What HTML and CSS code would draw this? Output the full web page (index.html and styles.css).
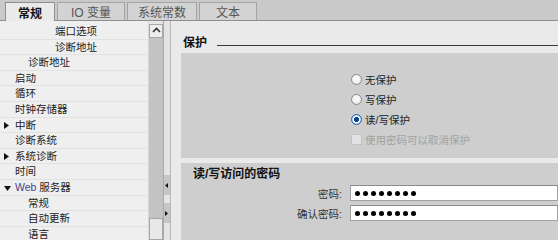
FILE: index.html
```html
<!DOCTYPE html>
<html lang="zh">
  <head>
    <meta charset="UTF-8" />
    <title>属性 - 保护</title>
    <link rel="stylesheet" href="styles.css">
  </head>
  <body>
    <div id="window">
      <div class="tabs">
        <div class="tab tab-general active">常规</div>
        <div class="tab tab-io">IO 变量</div>
        <div class="tab tab-const">系统常数</div>
        <div class="tab tab-text">文本</div>
      </div>

      <div class="main">
        <div class="tree">
          <div class="row lv2">端口选项</div>
          <div class="row lv2">诊断地址</div>
          <div class="row lv1">诊断地址</div>
          <div class="row lv0">启动</div>
          <div class="row lv0">循环</div>
          <div class="row lv0">时钟存储器</div>
          <div class="row lv0"><span class="twisty"><svg width="5" height="7" viewBox="0 0 5 7"><path d="M0 0 L5 3.5 L0 7 Z" fill="#111"/></svg></span>中断</div>
          <div class="row lv0">诊断系统</div>
          <div class="row lv0"><span class="twisty"><svg width="5" height="7" viewBox="0 0 5 7"><path d="M0 0 L5 3.5 L0 7 Z" fill="#111"/></svg></span>系统诊断</div>
          <div class="row lv0">时间</div>
          <div class="row lv0"><span class="twisty"><svg width="7" height="5" viewBox="0 0 7 5"><path d="M0 0 L7 0 L3.5 5 Z" fill="#111"/></svg></span><span class="web">Web</span>&nbsp;服务器</div>
          <div class="row lv1">常规</div>
          <div class="row lv1">自动更新</div>
          <div class="row lv1">语言</div>
        </div>

        <div class="vscroll">
          <div class="sb-up">
            <svg width="13" height="11" viewBox="0 0 13 11"><path d="M3 7 L6.5 3.5 L10 7" fill="none" stroke="#333" stroke-width="1.6"/></svg>
          </div>
          <div class="sb-track"></div>
          <div class="sb-thumb"></div>
        </div>

        <div class="splitter">
          <div class="grip">
            <svg width="4" height="5" viewBox="0 0 4 5"><path d="M3 0 L0 2.5 L3 5 Z" fill="#111"/></svg>
          </div>
          <div class="grip">
            <svg width="4" height="5" viewBox="0 0 4 5"><path d="M0 0 L3 2.5 L0 5 Z" fill="#111"/></svg>
          </div>
        </div>

        <div class="content">
          <div class="section-title">保护</div>

          <div class="panel panel-protect">
            <div class="option">
              <span class="radio"></span>
              <span>无保护</span>
            </div>
            <div class="option">
              <span class="radio"></span>
              <span>写保护</span>
            </div>
            <div class="option">
              <span class="radio checked"></span>
              <span>读/写保护</span>
            </div>
            <div class="option disabled">
              <span class="checkbox"></span>
              <span>使用密码可以取消保护</span>
            </div>
          </div>

          <div class="panel panel-password">
            <div class="panel-title">读/写访问的密码</div>
            <div class="field">
              <label>密码:</label>
              <div class="pwd">
                <span></span><span></span><span></span><span></span>
                <span></span><span></span><span></span><span></span>
              </div>
            </div>
            <div class="field">
              <label>确认密码:</label>
              <div class="pwd">
                <span></span><span></span><span></span><span></span>
                <span></span><span></span><span></span><span></span>
              </div>
            </div>
          </div>
        </div>
      </div>
    </div>
  </body>
</html>
```

FILE: styles.css
```css
body {
  margin: 0;
  padding: 0;
  font-family: "Liberation Sans", "Noto Sans CJK SC", sans-serif;
  font-size: 10.5px;
  color: #222;
  background-color: #eaeaea;
}

#window {
  width: 558px;
  height: 240px;
  overflow: hidden;
  display: flex;
  flex-direction: column;
}

/* tab strip */
.tabs {
  height: 21px;
  box-sizing: border-box;
  display: flex;
  align-items: flex-end;
  gap: 2px;
  padding-left: 5px;
  background-color: #c9c9c9;
  border-bottom: 1px solid #8f8f8f;
}

.tab {
  height: 18px;
  box-sizing: border-box;
  display: flex;
  align-items: center;
  justify-content: center;
  font-size: 12px;
  color: #555;
  background-color: #d3d3d3;
  border: 1px solid #a4a4a4;
  border-bottom: none;
}

.tab.active {
  height: 19px;
  margin-bottom: -1px;
  font-weight: bold;
  color: #111;
  background-color: #eaeaea;
  border-color: #8f8f8f;
}

.tab-general { width: 50px; }
.tab-io { width: 68px; }
.tab-const { width: 70px; }
.tab-text { width: 58px; }

.main {
  flex: 1;
  display: flex;
  min-height: 0;
}

/* navigation tree */
.tree {
  width: 148px;
  padding-top: 3px;
  background-color: #efefef;
  overflow: hidden;
}

.row {
  height: 15.6px;
  box-sizing: border-box;
  line-height: 15px;
  border-bottom: 1px solid #e2e2e2;
  white-space: nowrap;
}

.lv0 { padding-left: 15px; }
.lv1 { padding-left: 28px; }
.lv2 { padding-left: 55px; }

.twisty {
  display: inline-block;
  width: 11px;
  margin-left: -11px;
}

.twisty svg {
  vertical-align: 0;
}

.web {
  color: #4a3f86;
}

/* scrollbar */
.vscroll {
  width: 15px;
  box-sizing: border-box;
  padding-top: 3px;
  display: flex;
  flex-direction: column;
  background-color: #e6e6e6;
  border-left: 1px solid #d8d8d8;
}

.sb-up {
  height: 14px;
  box-sizing: border-box;
  border: 1px solid #a8a8a8;
  background-color: #ededed;
}

.sb-up svg {
  display: block;
}

.sb-track {
  flex: 1;
  background-color: #c3c3c3;
}

.sb-thumb {
  height: 22px;
  box-sizing: border-box;
  border: 1px solid #a8a8a8;
  background-color: #e8e8e8;
}

/* splitter */
.splitter {
  width: 8px;
  box-sizing: border-box;
  padding-top: 154px;
  display: flex;
  flex-direction: column;
  gap: 8px;
  background-color: #e4e4e4;
  border-left: 1px solid #a9a9a9;
  border-right: 1px solid #b8b8b8;
}

.grip {
  height: 20px;
  display: flex;
  align-items: center;
  justify-content: center;
  background-color: #c6c6c6;
}

/* property area */
.content {
  flex: 1;
  display: flex;
  flex-direction: column;
  padding-left: 10px;
  background-color: #eaeaea;
  overflow: hidden;
}

.section-title {
  height: 16px;
  margin: 12px 0 4px 2px;
  display: flex;
  align-items: center;
  font-size: 12px;
  font-weight: bold;
  color: #111;
}

.section-title::after {
  content: "";
  flex: 1;
  height: 1px;
  margin-left: 10px;
  margin-top: 8px;
  background-color: #3a3a3a;
}

.panel {
  background-color: #cecece;
}

.panel-protect {
  height: 105px;
  box-sizing: border-box;
  padding: 16px 0 0 170px;
}

.option {
  height: 20px;
  display: flex;
  align-items: center;
  gap: 3px;
}

.option.disabled {
  color: #a2a2a2;
}

.radio {
  width: 11px;
  height: 11px;
  box-sizing: border-box;
  border-radius: 50%;
  border: 1px solid #8c8c8c;
  background: radial-gradient(circle at 50% 40%, #ffffff 0, #f2f2f2 50%, #d6d6d6 100%);
}

.radio.checked {
  border-color: #2c6db5;
  background: radial-gradient(circle, #0d3f8c 0, #0d3f8c 2.2px, #ffffff 2.8px, #ffffff 3.3px, #8fc1ee 4.5px);
}

.checkbox {
  width: 11px;
  height: 11px;
  box-sizing: border-box;
  border: 1px solid #c4c4c4;
  background-color: #e2e2e2;
}

.panel-password {
  flex: 1;
  margin-top: 5px;
}

.panel-title {
  padding: 4px 0 0 12px;
  line-height: 14px;
  font-size: 12px;
  font-weight: bold;
  color: #111;
}

.field {
  display: flex;
  align-items: center;
  gap: 8px;
  margin-top: 4px;
}

.field:first-of-type {
  margin-top: 17px;
}

.field label {
  width: 161px;
  text-align: right;
  color: #333;
}

.pwd {
  flex: 1;
  height: 16px;
  box-sizing: border-box;
  display: flex;
  align-items: center;
  gap: 3px;
  padding-left: 4px;
  background-color: #fff;
  border: 1px solid #a0a0a0;
  border-top-color: #8a8a8a;
}

.pwd span {
  width: 5px;
  height: 5px;
  border-radius: 50%;
  background-color: #000;
}
```
